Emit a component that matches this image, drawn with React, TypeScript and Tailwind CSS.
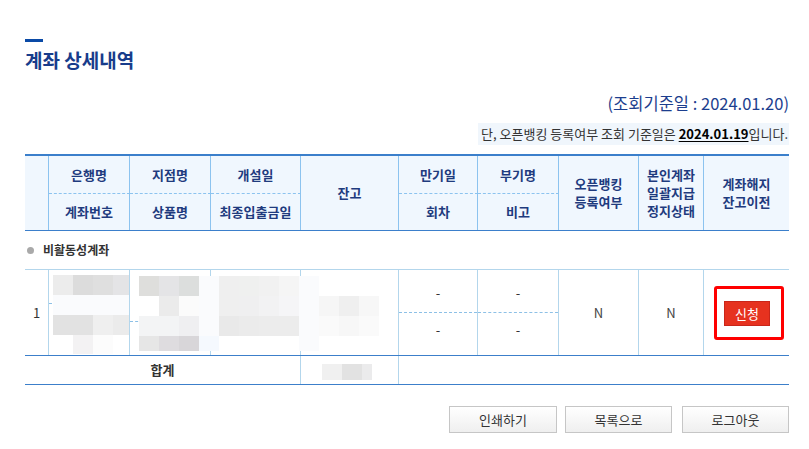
import React from 'react';

const gridCols = 'grid grid-cols-[24px_81px_81px_90px_98px_79px_81px_80px_65px_85px]';
const th = 'flex items-center justify-center text-center text-[13px] font-bold leading-[18px] text-[#1f3b7e]';

// pixelated privacy tiles, row by row
const blockA = [
  '#ececec', '#dcdcdc', '#dfdfdf', '#e4e4e6',
  '#fafbfd', '#fafbfd', '#fafbfd', '#fafbfd',
  '#e2e2e2', '#e2e2e2', '#efefef', '#ebebeb',
  '#ffffff', '#f3f2f3', '#fcfcfc', '#ffffff',
];

const blockB = [
  '#dededc', '#e4e4e6', '#dcdedd', '#fafbfd', '#efefef', '#eff0ef', '#f1f1f1', '#f5f5f5', '#fafbfd',
  '#ffffff', '#ebebeb', '#fbfbfb', '#fafbfd', '#efefef', '#efeff0', '#f2f2f3', '#f5f5f7', '#fafbfd',
  '#f3f4f5', '#f3f4f5', '#efeff1', '#fafbfd', '#e9e9e9', '#ebebeb', '#ececec', '#ececec', '#fafbfd',
  '#e6e6e6', '#dedcdf', '#d8d6d9', '#f5f9fe', '#ffffff', '#ffffff', '#ffffff', '#ffffff', '#fafbfd',
];

const blockC = ['#f6f6f6', '#efefef', '#f7f7f7', '#fafafa', '#f7f7f7', '#fafafa'];

const totalTiles = ['#f0f0f0', '#e2e2e2', '#ebebec'];

const Mosaic: React.FC<{ tiles: string[]; className: string }> = ({ tiles, className }) => (
  <div className={`pointer-events-none grid ${className}`}>
    {tiles.map((c, i) => (
      <div key={i} style={{ backgroundColor: c }} />
    ))}
  </div>
);

const HeadTop: React.FC<{ children: React.ReactNode }> = ({ children }) => (
  <div className={`${th} border-r border-b border-r-[#8cc3ef] border-b-[#8cc3ef] [border-bottom-style:dashed]`}>
    {children}
  </div>
);

const HeadBottom: React.FC<{ children: React.ReactNode }> = ({ children }) => (
  <div className={`${th} border-r border-[#8cc3ef]`}>{children}</div>
);

const HeadSpan: React.FC<{ children?: React.ReactNode; last?: boolean }> = ({ children, last }) => (
  <div className={`${th} row-span-2 ${last ? '' : 'border-r border-[#8cc3ef]'}`}>{children}</div>
);

const SplitCell: React.FC<{ topH: string; top?: string; bottom?: string }> = ({ topH, top, bottom }) => (
  <div className="flex flex-col border-r border-[#b3d6ec]">
    <div className={`flex ${topH} items-center justify-center border-b border-dashed border-[#8dc0e6] pt-[4px]`}>
      {top}
    </div>
    <div className="flex flex-1 items-center justify-center pb-[8px]">{bottom}</div>
  </div>
);

export default function App() {
  return (
    <div className="min-h-[449px] w-[809px] bg-white pl-[25px] pr-[20px] pt-[39px] font-['Noto_Sans_CJK_KR',sans-serif] text-[#333]">
      <div className="h-[3px] w-[18px] bg-[#0a4aa6]" />
      <h1 className="mt-[5px] text-[19px] font-bold leading-[26px] text-[#183c8b]">계좌 상세내역</h1>

      <p className="mt-[19px] text-right text-[16.5px] leading-[22px] text-[#1c3e8e]">(조회기준일 : 2024.01.20)</p>

      <div className="mt-[9px] flex justify-end">
        <p className="flex h-[22px] items-center bg-[#f0f6fc] pl-[3px] pr-[1px] text-[13px] text-[#333]">
          단, 오픈뱅킹 등록여부 조회 기준일은&nbsp;
          <span className="font-bold text-black underline underline-offset-2">2024.01.19</span>입니다.
        </p>
      </div>

      <div className="mt-[9px]">
        {/* header */}
        <div className={`${gridCols} grid-rows-[38px_36px] border-t-2 border-b border-t-[#3b7fcb] border-b-[#3b7fcb] bg-[#f0f7fe]`}>
          <HeadSpan />
          <HeadTop>은행명</HeadTop>
          <HeadTop>지점명</HeadTop>
          <HeadTop>개설일</HeadTop>
          <HeadSpan>잔고</HeadSpan>
          <HeadTop>만기일</HeadTop>
          <HeadTop>부기명</HeadTop>
          <HeadSpan>
            오픈뱅킹
            <br />
            등록여부
          </HeadSpan>
          <HeadSpan>
            본인계좌
            <br />
            일괄지급
            <br />
            정지상태
          </HeadSpan>
          <HeadSpan last>
            계좌해지
            <br />
            잔고이전
          </HeadSpan>
          <HeadBottom>계좌번호</HeadBottom>
          <HeadBottom>상품명</HeadBottom>
          <HeadBottom>최종입출금일</HeadBottom>
          <HeadBottom>회차</HeadBottom>
          <HeadBottom>비고</HeadBottom>
        </div>

        {/* group title */}
        <div className="flex h-[38px] items-center gap-[9px] pl-[2px]">
          <span className="h-[7px] w-[7px] rounded-full bg-[#a9a9a9]" />
          <span className="text-[12px] font-bold text-[#333]">비활동성계좌</span>
        </div>

        {/* account row */}
        <div className="relative border-t border-b border-t-[#b3d6ec] border-b-[#3c7fca]">
          <div className={`${gridCols} h-[85px] text-[13px] text-[#333]`}>
            <div className="flex items-center justify-center border-r border-[#b3d6ec]">1</div>
            <SplitCell topH="h-[34px]" />
            <SplitCell topH="h-[52px]" />
            <SplitCell topH="h-[43px]" />
            <div className="border-r border-[#b3d6ec]" />
            <SplitCell topH="h-[43px]" top="-" bottom="-" />
            <SplitCell topH="h-[43px]" top="-" bottom="-" />
            <div className="flex items-center justify-center border-r border-[#b3d6ec] text-[#444]">N</div>
            <div className="flex items-center justify-center border-r border-[#b3d6ec] text-[#444]">N</div>
            <div className="flex items-center pl-[10px]">
              <div className="rounded-[3px] border-[3px] border-[#ff0000] pt-[12px] pb-[11px] pl-[7px] pr-[11px]">
                <button className="h-[25px] w-[46px] border border-[#c9261a] bg-[#e6321f] text-[13px] leading-none text-white">
                  신청
                </button>
              </div>
            </div>
          </div>
          <Mosaic
            tiles={blockA}
            className="absolute left-[28px] top-[5px] grid-cols-[20px_20px_20px_16px] grid-rows-[20px_20px_20px_19px]"
          />
          <Mosaic
            tiles={blockB}
            className="absolute left-[114px] top-[6px] grid-cols-[repeat(9,20px)] grid-rows-[20px_20px_20px_15px]"
          />
          <Mosaic
            tiles={blockC}
            className="absolute left-[294px] top-[26px] grid-cols-[repeat(3,20px)] grid-rows-[20px_20px]"
          />
        </div>

        {/* total row */}
        <div className="grid h-[29px] grid-cols-[276px_98px_1fr] border-b border-b-[#3c7fca] text-[13px]">
          <div className="flex items-center justify-center border-r border-[#b3d6ec] font-bold text-[#333]">합계</div>
          <div className="flex items-center border-r border-[#b3d6ec] pl-[21px] pt-[4px]">
            <Mosaic tiles={totalTiles} className="h-[16px] grid-cols-[20px_20px_10px]" />
          </div>
          <div />
        </div>
      </div>

      <div className="mt-[21px] flex justify-end">
        <button className="h-[27px] w-[108px] border border-[#c6c6c6] bg-linear-to-b from-white to-[#efefef] text-[13px] text-[#333]">
          인쇄하기
        </button>
        <button className="ml-[8px] h-[27px] w-[107px] border border-[#c6c6c6] bg-linear-to-b from-white to-[#efefef] text-[13px] text-[#333]">
          목록으로
        </button>
        <button className="ml-[10px] h-[27px] w-[107px] border border-[#c6c6c6] bg-linear-to-b from-white to-[#efefef] text-[13px] text-[#333]">
          로그아웃
        </button>
      </div>
    </div>
  );
}
